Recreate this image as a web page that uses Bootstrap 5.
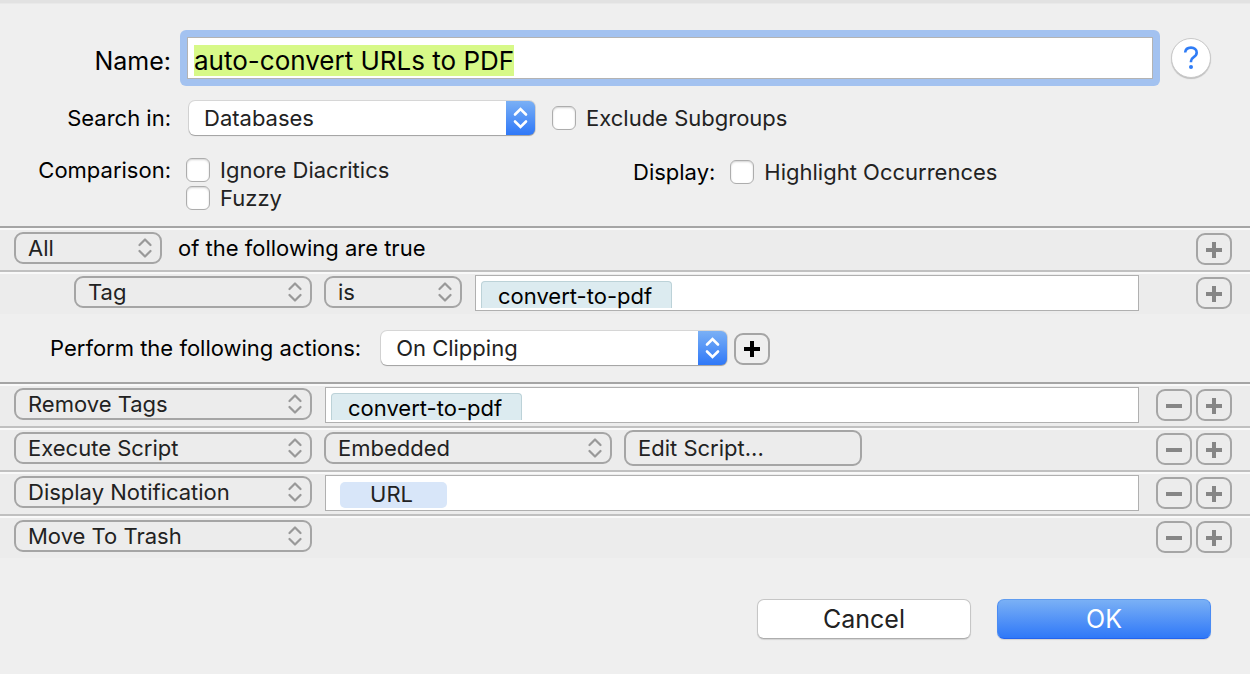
<!doctype html>
<html lang="en">
<head>
<meta charset="utf-8">
<meta name="viewport" content="width=device-width, initial-scale=1">
<title>Smart Rule</title>
<link href="https://cdn.jsdelivr.net/npm/bootstrap@5.3.0/dist/css/bootstrap.min.css" rel="stylesheet">
<style>
  body { background: #efefef; color: #000; font-family: Inter, "Liberation Sans", sans-serif; font-size: 22px; line-height: 28px; }
  .sheet { border-top: 3px solid #e2e2e2; box-shadow: inset 0 1px 0 #e9e9e9; }
  .settings { padding: 27px 39px 14px 0; }
  .side-label { width: 171px; flex: none; text-align: right; }
  .big { padding-top: 6px; font-size: 25px; }

  .focus-ring-box { background: #a3c2f0; border-radius: 6px; padding: 7px; margin: 0 11px 0 9px; }
  .name-field { height: 42px; padding: 5px 6px 1px; border: 1px solid #b3b3b3; border-radius: 0; font-size: 26px; line-height: 34px; color: #000; background: #fff; }
  .name-field:focus { border-color: #b3b3b3; box-shadow: none; color: #000; }
  .name-field::selection { background: rgba(215, 249, 136, .996); color: #000; }
  .help-btn { width: 40px; height: 40px; padding: 0; flex: none; border-radius: 50%; background: #fff; border: 1px solid #c9c9c9; box-shadow: 0 1px 1px rgba(0, 0, 0, .2); }

  .search-line { margin-top: 15px; }
  .search-line .pop-select { margin: 0 17px 0 18px; }
  .compare-line { margin-top: 21px; }
  .compare-options { padding-left: 15px; }
  .left-half { width: 50vw; flex: none; } /* the second column starts at the middle of the window */
  .display-options { gap: 15px; padding-left: 8px; padding-top: 2px; }

  .pop-select { width: 346px; height: 34px; flex: none; padding: 0 40px 0 15px; border: 0; border-radius: 6px; font-size: 22px; line-height: 34px; color: #222;
    background-color: #fff;
    background-image: url("data:image/svg+xml,%3Csvg xmlns='http://www.w3.org/2000/svg' viewBox='0 0 29 34'%3E%3Cpath d='M9 13.500l5.500-5.500L20 13.500M9 20.500l5.500 5.500L20 20.500' fill='none' stroke='white' stroke-width='2.600' stroke-linecap='round'/%3E%3C/svg%3E"), linear-gradient(#7ab0f5, #2f78f8);
    background-size: 29px 34px; background-position: right center; background-repeat: no-repeat;
    box-shadow: 0 0 0 1px rgba(0, 0, 0, .1), 0 1px 1px 0 rgba(0, 0, 0, .25); }
  .line-select { height: 32px; flex: none; margin-bottom: 2px; padding: 0 36px 0 12px; border: 2px solid #a5a5a5; border-radius: 9px; font-size: 22px; line-height: 28px; color: #222;
    background-color: transparent;
    background-image: url("data:image/svg+xml,%3Csvg xmlns='http://www.w3.org/2000/svg' viewBox='0 0 14 20'%3E%3Cpath d='M1.500 7L7 1.500 12.500 7M1.500 13L7 18.500 12.500 13' fill='none' stroke='%23999' stroke-width='2.200' stroke-linecap='round' stroke-linejoin='round'/%3E%3C/svg%3E");
    background-size: 14px 20px; background-position: right 8px center; }
  .w-all { width: 148px; }
  .w-is { width: 138px; }
  .w-attr { width: 238px; }
  .w-script { width: 288px; }
  .w-action { width: 298px; }

  .options { color: #222; }
  .tick { display: flex; align-items: center; gap: 10px; min-height: 28px; margin: 0; padding: 0; }
  .tick .form-check-input { width: 24px; height: 24px; margin: 0; float: none; flex: none; border: 1px solid #adadad; border-radius: 6px; background-color: #fff; box-shadow: inset 0 1px 2px rgba(0, 0, 0, .18); }

  .rule-row { display: flex; align-items: center; gap: 12px; height: 44px; padding: 0 18px 0 14px; border-top: 2px solid #c0c0c0; background: #ececec; box-shadow: inset 0 2px 0 #f9f9f9; }
  .rule-row.first { border-top-color: #a5a5a5; }
  .rule-row.nested { padding-left: 74px; }
  .rule-text { padding: 0 4px 2px; }
  .step-btn { width: 36px; height: 32px; flex: none; padding: 0; display: flex; align-items: center; justify-content: center; border: 2px solid #a5a5a5; border-radius: 9px; background: transparent; color: #868686; }
  .step-btn.strong { color: #000; }
  .strong svg { margin-bottom: 2px; }
  .script-btn { height: 36px; margin-bottom: 2px; padding: 0 12px; text-align: left; border: 2px solid #a5a5a5; border-radius: 9px; font-size: 22px; line-height: 30px; color: #222; }

  .token-field { display: flex; flex: 1 1 0; min-width: 0; height: 36px; margin: 0 5px 0 1px; border: 1px solid #b0b0b0; background: #fff; overflow: hidden; }
  .nested .token-field { margin-right: 45px; }
  .token-field input { flex: 1 1 0; min-width: 0; border: 0; background: transparent; outline: 0; }
  .tag-token { height: 27px; margin: 5px 0 0 5px; padding: 0 19px 0 16px; border: 1px solid #bcd2d8; border-bottom: 0; border-radius: 4px 4px 0 0; background: #dcebf0; }
  .var-token { width: 107px; height: 26px; margin: 6px 0 0 14px; padding-right: 4px; line-height: 24px; text-align: center; border-radius: 5px; background: #d8e6f9; color: #222; }

  .perform { display: flex; align-items: center; height: 68px; padding-left: 50px; }
  .perform .pop-select { margin: 0 7px 0 20px; }
  .perform .step-btn { margin-top: 2px; }

  .footer-bar { gap: 26px; padding: 41px 39px 35px; }
  .dialog-btn { width: 214px; height: 40px; padding: 0; border: 1px solid #c6c6c6; border-bottom-color: #adadad; border-radius: 7px; background: #fff; color: #222; font-size: 25px; line-height: 38px; box-shadow: 0 1px 1px rgba(0, 0, 0, .12); }
  .dialog-btn.ok { border-color: #5f9cf0 #4a8bf3 #2463ee; background: linear-gradient(#7ab0f5, #2f78f8); color: #fff; }
</style>
</head>
<body>
<svg class="d-none" xmlns="http://www.w3.org/2000/svg">
  <symbol id="plus" viewBox="0 0 16 18"><path d="M6 2h4v6h6v4h-6v6H6v-6H0V8h6z" fill="currentColor"/></symbol>
  <symbol id="minus" viewBox="0 0 16 18"><path d="M0 8h16v4H0z" fill="currentColor"/></symbol>
</svg>

<form class="sheet">
  <div class="settings">
    <div class="d-flex align-items-center">
      <label class="side-label big" for="name">Name:</label>
      <div class="focus-ring-box flex-grow-1">
        <input class="form-control name-field" id="name" type="text" value="auto-convert URLs to PDF" autocomplete="off" spellcheck="false" autofocus>
      </div>
      <button class="btn help-btn" type="button" aria-label="Help">
        <svg class="d-block mx-auto" width="16" height="24" viewBox="0 0 16 24"><path d="M2.200 6.500C2.400 3.300 4.700 1.600 8 1.600c3.400 0 5.700 1.900 5.700 4.800 0 2.200-1.100 3.500-3 4.700C8.700 12.400 8 13.300 8 15v1.200" fill="none" stroke="#2f7cf6" stroke-width="2.600"/><circle cx="8" cy="21" r="2" fill="#2f7cf6"/></svg>
      </button>
    </div>

    <div class="d-flex align-items-center search-line">
      <label class="side-label" for="scope">Search in:</label>
      <select class="form-select pop-select" id="scope"><option>Databases</option></select>
      <div class="tick options"><input class="form-check-input" type="checkbox" id="subgroups"><label for="subgroups">Exclude Subgroups</label></div>
    </div>

    <div class="d-flex align-items-start compare-line">
      <div class="d-flex left-half">
        <div class="side-label">Comparison:</div>
        <div class="options compare-options">
          <div class="tick"><input class="form-check-input" type="checkbox" id="diacritics"><label for="diacritics">Ignore Diacritics</label></div>
          <div class="tick"><input class="form-check-input" type="checkbox" id="fuzzy"><label for="fuzzy">Fuzzy</label></div>
        </div>
      </div>
      <div class="d-flex display-options">
        <div>Display:</div>
        <div class="tick options"><input class="form-check-input" type="checkbox" id="highlight"><label for="highlight">Highlight Occurrences</label></div>
      </div>
    </div>
  </div>

  <section aria-label="Conditions">
    <div class="rule-row first">
      <select class="form-select line-select w-all" aria-label="Match"><option>All</option></select>
      <span class="rule-text">of the following are true</span>
      <button class="step-btn ms-auto" type="button" aria-label="Add condition"><svg width="16" height="18"><use href="#plus"/></svg></button>
    </div>
    <div class="rule-row nested">
      <select class="form-select line-select w-attr" aria-label="Attribute"><option>Tag</option></select>
      <select class="form-select line-select w-is" aria-label="Operator"><option>is</option></select>
      <div class="token-field"><span class="tag-token">convert-to-pdf</span><input type="text" aria-label="Tag value"></div>
      <button class="step-btn" type="button" aria-label="Add condition"><svg width="16" height="18"><use href="#plus"/></svg></button>
    </div>
  </section>

  <div class="perform">
    <label for="trigger">Perform the following actions:</label>
    <select class="form-select pop-select" id="trigger"><option>On Clipping</option></select>
    <button class="step-btn strong" type="button" aria-label="Add action"><svg width="16" height="18"><use href="#plus"/></svg></button>
  </div>

  <section aria-label="Actions">
    <div class="rule-row first">
      <select class="form-select line-select w-action" aria-label="Action"><option>Remove Tags</option></select>
      <div class="token-field"><span class="tag-token">convert-to-pdf</span><input type="text" aria-label="Tags to remove"></div>
      <div class="d-flex gap-1 ms-auto">
        <button class="step-btn" type="button" aria-label="Remove action"><svg width="16" height="18"><use href="#minus"/></svg></button>
        <button class="step-btn" type="button" aria-label="Add action"><svg width="16" height="18"><use href="#plus"/></svg></button>
      </div>
    </div>
    <div class="rule-row">
      <select class="form-select line-select w-action" aria-label="Action"><option>Execute Script</option></select>
      <select class="form-select line-select w-script" aria-label="Script source"><option>Embedded</option></select>
      <button class="btn script-btn w-attr" type="button">Edit Script...</button>
      <div class="d-flex gap-1 ms-auto">
        <button class="step-btn" type="button" aria-label="Remove action"><svg width="16" height="18"><use href="#minus"/></svg></button>
        <button class="step-btn" type="button" aria-label="Add action"><svg width="16" height="18"><use href="#plus"/></svg></button>
      </div>
    </div>
    <div class="rule-row">
      <select class="form-select line-select w-action" aria-label="Action"><option>Display Notification</option></select>
      <div class="token-field"><span class="var-token">URL</span><input type="text" aria-label="Notification text"></div>
      <div class="d-flex gap-1 ms-auto">
        <button class="step-btn" type="button" aria-label="Remove action"><svg width="16" height="18"><use href="#minus"/></svg></button>
        <button class="step-btn" type="button" aria-label="Add action"><svg width="16" height="18"><use href="#plus"/></svg></button>
      </div>
    </div>
    <div class="rule-row">
      <select class="form-select line-select w-action" aria-label="Action"><option>Move To Trash</option></select>
      <div class="d-flex gap-1 ms-auto">
        <button class="step-btn" type="button" aria-label="Remove action"><svg width="16" height="18"><use href="#minus"/></svg></button>
        <button class="step-btn" type="button" aria-label="Add action"><svg width="16" height="18"><use href="#plus"/></svg></button>
      </div>
    </div>
  </section>

  <div class="footer-bar d-flex justify-content-end">
    <button class="btn dialog-btn" type="button">Cancel</button>
    <button class="btn dialog-btn ok" type="submit">OK</button>
  </div>
</form>

<script src="https://cdn.jsdelivr.net/npm/bootstrap@5.3.0/dist/js/bootstrap.bundle.min.js"></script>
<script>
  // The rule's name opens focused and selected, ready to be typed over.
  const nameField = document.getElementById('name');
  nameField.focus();
  nameField.select();
</script>
</body>
</html>
